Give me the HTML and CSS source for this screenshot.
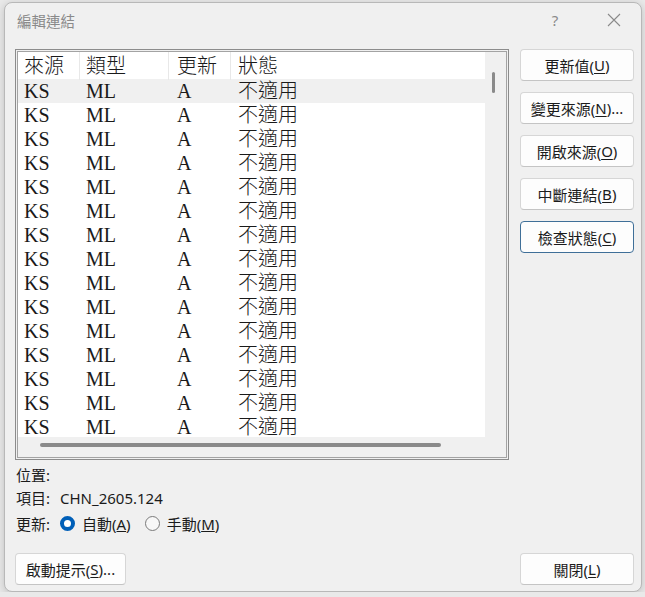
FILE: index.html
```html
<!DOCTYPE html>
<html lang="zh-Hant">
<head>
<meta charset="utf-8">
<link rel="stylesheet" href="styles.css">
</head>
<body>

<div class="dialog">
    <div class="titlebar">
        <span class="title">編輯連結</span>
        <span class="help">?</span>
        <span class="close">
            <svg width="14" height="14" viewBox="0 0 14 14"><path d="M1 1 L13 13 M13 1 L1 13" stroke="#8a8a8a" stroke-width="1.1" fill="none"/></svg>
        </span>
    </div>

    <div class="content">
        <div class="main">
            <div class="listbox">
                <div class="listinner">
                    <div class="list">
                        <div class="row head"><span>來源</span><span>類型</span><span>更新</span><span>狀態</span></div>
                        <div class="row sel"><span>KS</span><span>ML</span><span>A</span><span>不適用</span></div>
                        <div class="row"><span>KS</span><span>ML</span><span>A</span><span>不適用</span></div>
                        <div class="row"><span>KS</span><span>ML</span><span>A</span><span>不適用</span></div>
                        <div class="row"><span>KS</span><span>ML</span><span>A</span><span>不適用</span></div>
                        <div class="row"><span>KS</span><span>ML</span><span>A</span><span>不適用</span></div>
                        <div class="row"><span>KS</span><span>ML</span><span>A</span><span>不適用</span></div>
                        <div class="row"><span>KS</span><span>ML</span><span>A</span><span>不適用</span></div>
                        <div class="row"><span>KS</span><span>ML</span><span>A</span><span>不適用</span></div>
                        <div class="row"><span>KS</span><span>ML</span><span>A</span><span>不適用</span></div>
                        <div class="row"><span>KS</span><span>ML</span><span>A</span><span>不適用</span></div>
                        <div class="row"><span>KS</span><span>ML</span><span>A</span><span>不適用</span></div>
                        <div class="row"><span>KS</span><span>ML</span><span>A</span><span>不適用</span></div>
                        <div class="row"><span>KS</span><span>ML</span><span>A</span><span>不適用</span></div>
                        <div class="row"><span>KS</span><span>ML</span><span>A</span><span>不適用</span></div>
                        <div class="row"><span>KS</span><span>ML</span><span>A</span><span>不適用</span></div>
                    </div>
                    <div class="vscroll"><div class="vthumb"></div></div>
                    <div class="hscroll"><div class="hthumb"></div></div>
                    <div class="corner"></div>
                </div>
            </div>

            <div class="buttons">
                <div class="btn">更新值(<u>U</u>)</div>
                <div class="btn">變更來源(<u>N</u>)...</div>
                <div class="btn">開啟來源(<u>O</u>)</div>
                <div class="btn">中斷連結(<u>B</u>)</div>
                <div class="btn focus">檢查狀態(<u>C</u>)</div>
            </div>
        </div>

        <div class="info">
            <div class="line"><span class="label">位置:</span></div>
            <div class="line"><span class="label">項目:</span><span>CHN_2605.124</span></div>
            <div class="line radios">
                <span class="label">更新:</span>
                <span class="radio on"></span><span class="rtext">自動(<u>A</u>)</span>
                <span class="radio"></span><span class="rtext">手動(<u>M</u>)</span>
            </div>
        </div>

        <div class="footer">
            <div class="btn small">啟動提示(<u>S</u>)...</div>
            <div class="btn">關閉(<u>L</u>)</div>
        </div>
    </div>
</div>

</body>
</html>
```

FILE: styles.css
```css
body {
    margin: 0px;
    padding: 0px;
    background-color: #e9e9e9;
    font-family: "Noto Sans", "Noto Sans CJK TC", sans-serif;
    font-size: 15px;
    color: #1b1b1b;
}

.dialog {
    width: 638px;
    height: 590px;
    margin: 2px 0px 0px 4px;
    box-sizing: border-box;
    border: 1px solid #b8b8b8;
    border-radius: 8px;
    background-color: #f0f0f0;
    box-shadow: 0px 2px 8px rgba(0, 0, 0, 0.18);
    overflow: hidden;
}

.titlebar {
    height: 34px;
    display: flex;
    align-items: center;
    padding-left: 12px;
    color: #8a8a8a;
    font-size: 14.5px;
}

.title {
    flex: 1;
}

.help {
    width: 20px;
    margin-right: 42px;
    text-align: center;
    font-size: 15px;
}

.close {
    width: 14px;
    height: 14px;
    margin-right: 20px;
    display: flex;
}

.content {
    padding: 12px 7px 0px 10px;
}

.main {
    display: flex;
    gap: 11px;
}

.listbox {
    width: 494px;
    height: 411px;
    box-sizing: border-box;
    border: 1px solid #8c8c8c;
    padding: 1px;
}

.listinner {
    height: 100%;
    box-sizing: border-box;
    border: 1px solid #a3a3a3;
    display: grid;
    grid-template-columns: 1fr 21px;
    grid-template-rows: 1fr 20px;
    background-color: #f0f0f0;
}

.list {
    background-color: #ffffff;
    overflow: hidden;
    font-family: "Liberation Serif", "Noto Sans CJK TC", serif;
    font-size: 20px;
    font-weight: 300;
    color: #1a1a1a;
}

.row {
    display: grid;
    grid-template-columns: 62px 89px 62px 1fr;
    height: 24px;
    line-height: 24px;
}

.row span {
    padding-left: 6px;
    white-space: nowrap;
}

.row span:nth-child(3) {
    padding-left: 8px;
}

.row span:nth-child(4) {
    padding-left: 7px;
}

.head {
    height: 27px;
    line-height: 28px;
}

.head span {
    border-right: 1px solid #e8e8e8;
}

.head span:last-child {
    border-right: none;
}

.sel {
    background-color: #f0f0f0;
}

.vscroll {
    padding: 20px 0px 0px 7px;
}

.vthumb {
    width: 3px;
    height: 21px;
    background-color: #8a8a8a;
    border-radius: 2px;
}

.hscroll {
    padding: 6px 0px 0px 22px;
}

.hthumb {
    width: 401px;
    height: 4px;
    background-color: #8a8a8a;
    border-radius: 2px;
}

.buttons {
    display: flex;
    flex-direction: column;
    gap: 11px;
}

.btn {
    width: 114px;
    height: 32px;
    box-sizing: border-box;
    border: 1px solid #d6d6d6;
    border-bottom-color: #c4c4c4;
    border-radius: 4px;
    background-color: #fdfdfd;
    display: flex;
    align-items: center;
    justify-content: center;
    color: #1b1b1b;
    white-space: nowrap;
}

.btn u {
    text-underline-offset: 2px;
}

.focus {
    border: 1px solid #3f6f98;
}

.info {
    margin-top: 3px;
    padding-left: 1px;
}

.line {
    display: flex;
    align-items: center;
    height: 23px;
}

.label {
    width: 44px;
}

.radios {
    height: 26px;
    margin-top: 1px;
}

.radio {
    width: 15px;
    height: 15px;
    box-sizing: border-box;
    border-radius: 50%;
    border: 1px solid #7a7a7a;
    background-color: #f7f7f7;
    margin-right: 7px;
}

.radio.on {
    border: 4px solid #005fb8;
    background-color: #ffffff;
}

.rtext {
    margin-right: 14px;
}

.footer {
    margin-top: 17px;
    display: flex;
    justify-content: space-between;
}

.small {
    width: 111px;
}
```
